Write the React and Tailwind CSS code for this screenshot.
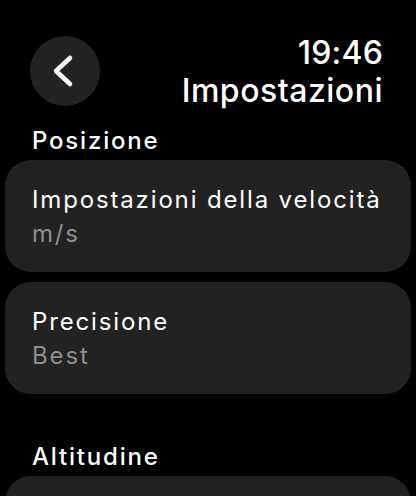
export default function App() {
  const sections = [
    {
      title: "Posizione",
      items: [
        { label: "Impostazioni della velocità", value: "m/s" },
        { label: "Precisione", value: "Best" },
      ],
    },
    {
      title: "Altitudine",
      items: [],
    },
  ];

  return (
    <div
      className="w-[416px] h-[496px] bg-black text-white overflow-hidden"
      style={{ fontFamily: "Inter, 'Noto Sans', sans-serif" }}
    >
      {/* Header */}
      <div className="flex items-start justify-between pl-[30px] pr-[33px] pt-[33px]">
        <button className="mt-[3px] w-[70px] h-[70px] rounded-full bg-[#232323] flex items-center justify-center">
          <svg width="70" height="70" viewBox="0 0 70 70" fill="none">
            <path
              d="M40 22L26 35L40 48"
              stroke="white"
              strokeWidth={4.5}
              strokeLinecap="round"
              strokeLinejoin="round"
            />
          </svg>
        </button>
        <div className="flex flex-col items-end">
          <span className="text-[32px] leading-[39px] font-medium tracking-[0.2px]">19:46</span>
          <span className="text-[32px] leading-[38px] font-medium tracking-[0.5px]">Impostazioni</span>
        </div>
      </div>

      {/* Sections */}
      <div className="flex flex-col mt-[16px]">
        {sections.map((s, si) => (
          <div key={s.title} className={si > 0 ? "mt-[48px]" : ""}>
            <div className="pl-[32px] text-[24px] leading-[29px] font-medium tracking-[1.8px] mb-[5px]">
              {s.title}
            </div>
            <div className="flex flex-col gap-[10px] px-[5px]">
              {s.items.map((it) => (
                <div
                  key={it.label}
                  className="rounded-[26px] bg-[#222222] pl-[27px] pr-[8px] pt-[23px] pb-[21px]"
                >
                  <div className="text-[24px] leading-[34px] tracking-[1.85px] whitespace-nowrap">
                    {it.label}
                  </div>
                  <div className="text-[24px] leading-[34px] tracking-[1.85px] text-[#8e8e93]">
                    {it.value}
                  </div>
                </div>
              ))}
              {s.items.length === 0 && (
                <div className="rounded-[26px] bg-[#222222] h-[112px]" />
              )}
            </div>
          </div>
        ))}
      </div>
    </div>
  );
}
